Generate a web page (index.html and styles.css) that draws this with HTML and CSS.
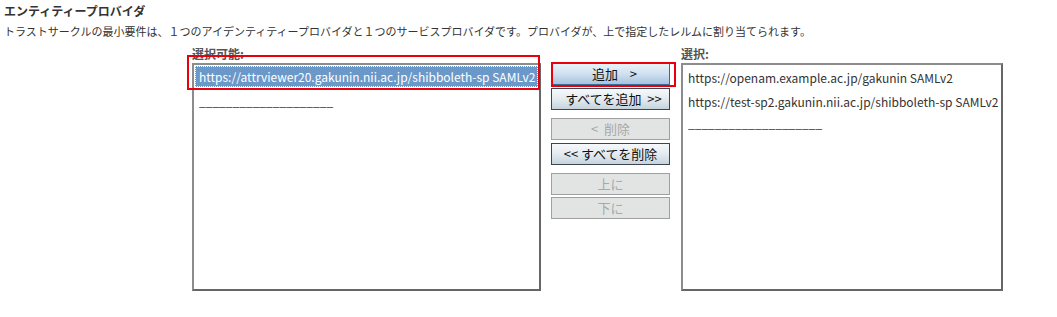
FILE: index.html
```html
<!DOCTYPE html>
<html lang="ja">
<head>
<meta charset="utf-8">
<title>エンティティープロバイダ</title>
<link rel="stylesheet" href="styles.css">
</head>
<body>
<div class="page">
  <h1 class="title">エンティティープロバイダ</h1>
  <p class="desc">トラストサークルの最小要件は、１つのアイデンティティープロバイダと１つのサービスプロバイダです。プロバイダが、上で指定したレルムに割り当てられます。</p>
  <div class="chooser">
    <div class="col col-left">
      <div class="label">選択可能:</div>
      <div class="list list-left">
        <div class="opt selected">https://attrviewer20.gakunin.nii.ac.jp/shibboleth-sp SAMLv2</div>
        <div class="opt">____________________</div>
      </div>
      <div class="mark mark-left"></div>
    </div>
    <div class="buttons">
      <div class="btn-wrap">
        <button class="btn btn-hot">追加    &gt;</button>
        <div class="mark mark-btn"></div>
      </div>
      <button class="btn btn-add">すべてを追加  &gt;&gt;</button>
      <button class="btn btn-off group">&lt;  削除</button>
      <button class="btn">&lt;&lt; すべてを削除</button>
      <button class="btn btn-off group">上に</button>
      <button class="btn btn-off tight">下に</button>
    </div>
    <div class="col col-right">
      <div class="label">選択:</div>
      <div class="list list-right">
        <div class="opt">https://openam.example.ac.jp/gakunin SAMLv2</div>
        <div class="opt">https://test-sp2.gakunin.nii.ac.jp/shibboleth-sp SAMLv2</div>
        <div class="opt">____________________</div>
      </div>
    </div>
  </div>
</div>
</body>
</html>
```

FILE: styles.css
```css
html, body {
  margin: 0;
  padding: 0;
  background: #ffffff;
}
body {
  font-family: "Noto Sans CJK JP", "Noto Sans", sans-serif;
  color: #333333;
}
.page {
  padding: 2px 4px 0 4px;
}
.title {
  margin: 0;
  font-size: 12px;
  font-weight: bold;
  line-height: 17px;
  color: #333333;
}
.desc {
  margin: 2px 0 0 0;
  font-size: 11px;
  line-height: 20px;
  color: #333333;
  white-space: nowrap;
}
.chooser {
  display: flex;
  align-items: flex-start;
  margin-left: 188px;
  margin-top: 5px;
}
.col {
  display: flex;
  flex-direction: column;
  position: relative;
}
.label {
  font-size: 12px;
  font-weight: bold;
  line-height: 16px;
  color: #555555;
}
.list {
  height: 222px;
  border-style: solid;
  border-width: 2px;
  border-color: #8c8c8c #666666 #666666 #8c8c8c;
  padding: 1px 1px;
  box-sizing: content-box;
  background: #ffffff;
  margin-top: 1px;
}
.list-left {
  width: 343px;
}
.list-right {
  width: 316px;
}
.opt {
  font-size: 12px;
  line-height: 21px;
  height: 21px;
  padding: 0 4px;
  margin-bottom: 3px;
  color: #333333;
  white-space: nowrap;
}
.list-right .opt {
  padding-left: 4px;
}
.list-right .opt:first-child {
  margin-top: 1px;
}
.list-right .opt:last-child {
  margin-top: -3px;
}
.opt.selected {
  background: #6a98c9;
  color: #ffffff;
  outline: 1px dotted #ffffff;
  outline-offset: -1px;
}
.buttons {
  display: flex;
  flex-direction: column;
  width: 119px;
  margin-left: 10px;
  margin-right: 11px;
  margin-top: 17px;
}
.btn-wrap {
  position: relative;
  display: flex;
  flex-direction: column;
}
.btn {
  height: 22px;
  margin: 0 0 3px 0;
  padding: 0;
  font-family: "Noto Sans CJK JP", "Noto Sans", sans-serif;
  font-size: 13px;
  line-height: 20px;
  white-space: pre;
  color: #111111;
  border: 1px solid #3b4650;
  background: linear-gradient(#f6f9fb, #e4ebf0 50%, #c6d3dc);
  text-align: center;
}
.btn-hot {
  border-color: #3d6a92;
  background: linear-gradient(#eaf2f9, #cfe0ef 50%, #a5c3df);
  padding-left: 8px;
}
.btn-add {
  padding-left: 6px;
}
.btn-off {
  color: #a8a8a8;
  border: 1px solid #a0a0a0;
  background: #e2e4e4;
}
.group {
  margin-top: 5px;
}
.tight {
  margin-top: -1px;
}
.mark {
  position: absolute;
  border: 2px solid #e8000b;
  pointer-events: none;
}
.mark-left {
  left: -5px;
  top: 9px;
  width: 349px;
  height: 31px;
}
.mark-btn {
  left: 0;
  top: -1px;
  width: 121px;
  height: 21px;
}
```
